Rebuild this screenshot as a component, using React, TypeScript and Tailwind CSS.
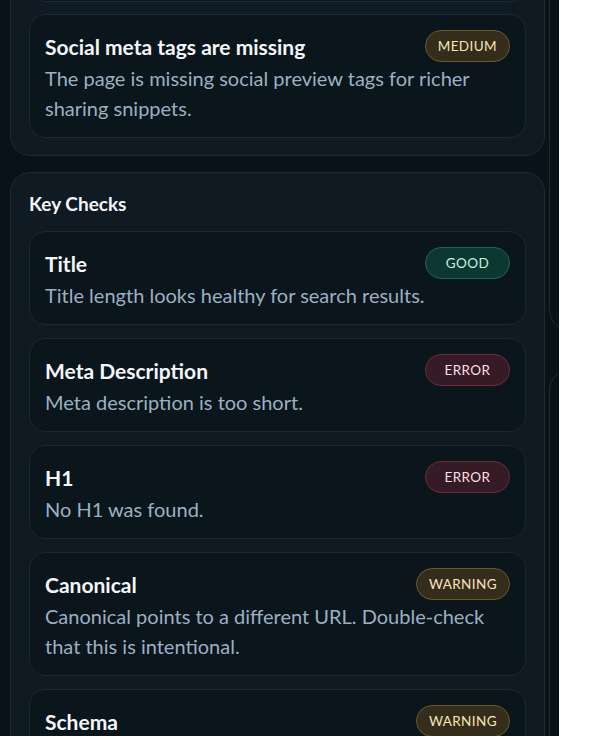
import React from "react";

type Tone = "good" | "error" | "warning" | "medium" | "high";

const toneClass: Record<Tone, string> = {
  good: "bg-[#0d3831] border-[#1d6353] text-[#c2f2e1]",
  error: "bg-[#361b26] border-[#6a2b3c] text-[#fbdde3]",
  warning: "bg-[#352d1c] border-[#6a582b] text-[#f5e6b5]",
  medium: "bg-[#352d1c] border-[#6a582b] text-[#f5e6b5]",
  high: "bg-[#361b26] border-[#6a2b3c] text-[#fbdde3]",
};

function Badge({ tone, label }: { tone: Tone; label: string }) {
  return (
    <span
      className={`flex h-[32px] min-w-[85px] shrink-0 items-center justify-center rounded-full border px-[12px] pt-[2px] text-[13.5px] uppercase leading-none tracking-[0.03em] ${toneClass[tone]}`}
    >
      {label}
    </span>
  );
}

function Card({ title, desc, tone, label }: { title: string; desc: string; tone: Tone; label: string }) {
  return (
    <div className="rounded-[16px] border border-[#1b2833] bg-[#0b151c] px-[15px] pb-[14px] pt-[15px]">
      <div className="flex h-[32px] items-center justify-between gap-3">
        <div className="mt-[2px] text-[21px] font-bold leading-[28px] text-[#f4f7fa]">{title}</div>
        <Badge tone={tone} label={label} />
      </div>
      <p className="mt-[1px] text-[20px] leading-[30px] text-[#9bb0c2]">{desc}</p>
    </div>
  );
}

export default function App() {
  return (
    <div className="font-['Lato',sans-serif]">
      <div className="h-[736px] w-[559px] overflow-hidden bg-[#0a1219]">
        <div className="flex">
          <div className="ml-[10px] mt-[-141px] flex w-[535px] shrink-0 flex-col gap-[16px]">
            <section className="rounded-[20px] border border-[#1d2a35] bg-[#0f1a22] px-[18px] pb-[17px] pt-[18px]">
              <div className="flex flex-col gap-[12px]">
                <Card
                  title="Images are missing alt text"
                  desc="Several images do not describe their content for assistive tools."
                  tone="high"
                  label="High"
                />
                <Card
                  title="Social meta tags are missing"
                  desc="The page is missing social preview tags for richer sharing snippets."
                  tone="medium"
                  label="Medium"
                />
              </div>
            </section>
            <section className="rounded-[20px] border border-[#1d2a35] bg-[#0f1a22] px-[18px] pb-[17px] pt-[18px]">
              <h2 className="mb-[14px] text-[19px] font-bold leading-[26px] text-[#f4f7fa]">Key Checks</h2>
              <div className="flex flex-col gap-[13px]">
                <Card title="Title" desc="Title length looks healthy for search results." tone="good" label="Good" />
                <Card title="Meta Description" desc="Meta description is too short." tone="error" label="Error" />
                <Card title="H1" desc="No H1 was found." tone="error" label="Error" />
                <Card
                  title="Canonical"
                  desc="Canonical points to a different URL. Double-check that this is intentional."
                  tone="warning"
                  label="Warning"
                />
                <Card title="Schema" desc="No structured data was detected on this page." tone="warning" label="Warning" />
              </div>
            </section>
          </div>
          <div className="ml-[4px] flex w-[300px] shrink-0 flex-col gap-[40px]">
            <div className="mt-[-40px] h-[370px] rounded-[20px] border border-[#1d2a35] bg-[#08121a]" />
            <div className="h-[500px] rounded-[20px] border border-[#1d2a35] bg-[#08121a]" />
          </div>
        </div>
      </div>
    </div>
  );
}
